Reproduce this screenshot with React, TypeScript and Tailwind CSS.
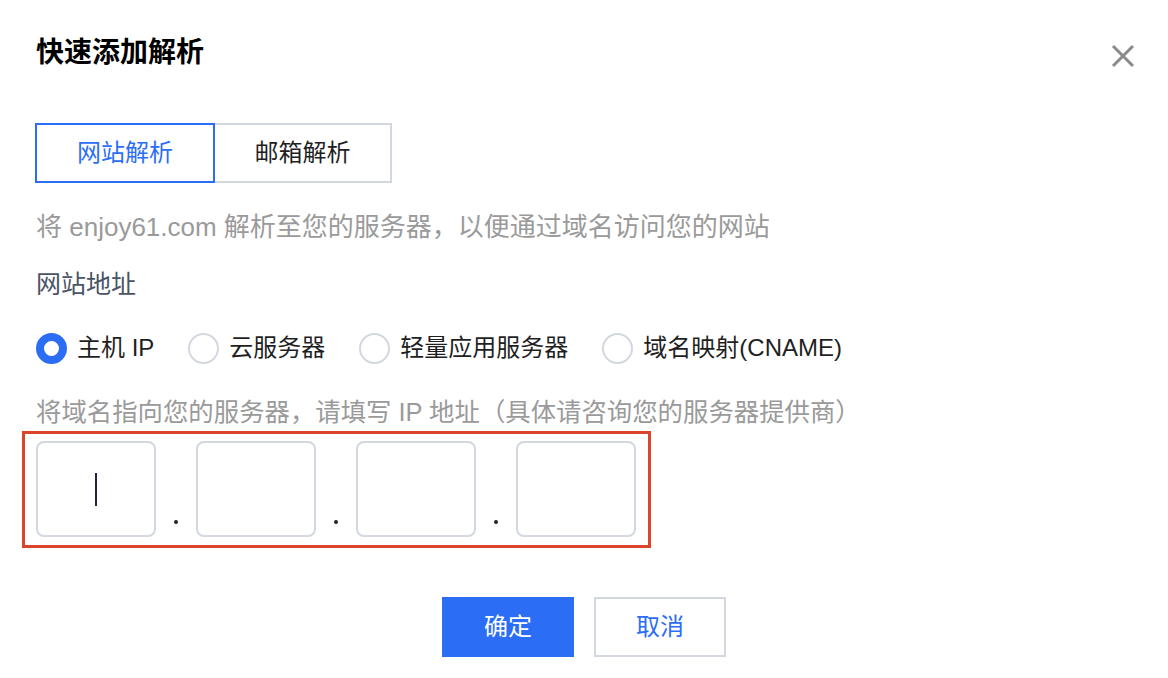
import React from "react";

const font = { fontFamily: '"Liberation Sans", "Noto Sans CJK SC", sans-serif' };

function Radio({ checked, label }: { checked?: boolean; label: string }) {
  return (
    <div className="flex items-center gap-[10px]">
      <span
        className={
          checked
            ? "box-border w-[31px] h-[31px] rounded-full border-[8px] border-[#2b6ef5] bg-white"
            : "box-border w-[31px] h-[31px] rounded-full border-2 border-[#d3d7df] bg-white"
        }
      />
      <span className="text-[24px] leading-[36px] text-[#1f1f1f]">{label}</span>
    </div>
  );
}

function Box({ cursor }: { cursor?: boolean }) {
  return (
    <div className="box-border w-[120px] h-[96px] rounded-[8px] border-2 border-[#d3d7e1] bg-white flex items-center justify-center">
      {cursor && <span className="block w-[2px] h-[33px] bg-[#1e2447]" />}
    </div>
  );
}

function Dot() {
  return (
    <div className="w-[40px] h-[96px] flex items-end justify-center pb-[13px]">
      <span className="block w-[4px] h-[4px] rounded-full bg-[#222]" />
    </div>
  );
}

export default function App() {
  return (
    <div className="w-[1168px] h-[678px] bg-white px-[36px] pt-[33px] box-border" style={font}>
      <div className="flex items-center justify-between">
        <h1 className="text-[28px] leading-[40px] font-bold text-black">快速添加解析</h1>
        <svg width="24" height="24" viewBox="0 0 24 24" className="mr-[-3px] mt-[6px]">
          <path d="M2 2 L22 22 M22 2 L2 22" stroke="#8a8a8a" strokeWidth="3" fill="none" />
        </svg>
      </div>

      <div className="mt-[50px] ml-[-1px] flex">
        <div className="box-border w-[180px] h-[60px] border-2 border-[#2b6ef5] flex items-center justify-center text-[24px] text-[#2b6ef5]">
          网站解析
        </div>
        <div className="box-border w-[177px] h-[60px] border-2 border-l-0 border-[#d3d7df] flex items-center justify-center text-[24px] text-[#1f1f1f]">
          邮箱解析
        </div>
      </div>

      <p className="mt-[26px] text-[26px] leading-[36px] text-[#9a9a9a]">
        将 enjoy61.com 解析至您的服务器，以便通过域名访问您的网站
      </p>

      <p className="mt-[21px] text-[25px] leading-[36px] text-[#4a5466]">网站地址</p>

      <div className="mt-[28px] flex items-center gap-[34px]">
        <Radio checked label="主机 IP" />
        <Radio label="云服务器" />
        <Radio label="轻量应用服务器" />
        <Radio label="域名映射(CNAME)" />
      </div>

      <p className="mt-[28px] text-[25.4px] leading-[36px] text-[#9a9a9a]">
        将域名指向您的服务器，请填写 IP 地址（具体请咨询您的服务器提供商）
      </p>

      <div className="mt-[1px] ml-[-14px] w-fit border-[3px] border-[#d9442a] pl-[11px] pr-[12px] pt-[7px] pb-[8px] flex">
        <Box cursor />
        <Dot />
        <Box />
        <Dot />
        <Box />
        <Dot />
        <Box />
      </div>

      <div className="mt-[49px] flex justify-center gap-[20px]">
        <button className="w-[132px] h-[60px] bg-[#2b6ef5] text-white text-[24px]">确定</button>
        <button className="box-border w-[132px] h-[60px] border-2 border-[#d3d7df] bg-white text-[#2b6ef5] text-[24px]">
          取消
        </button>
      </div>
    </div>
  );
}
